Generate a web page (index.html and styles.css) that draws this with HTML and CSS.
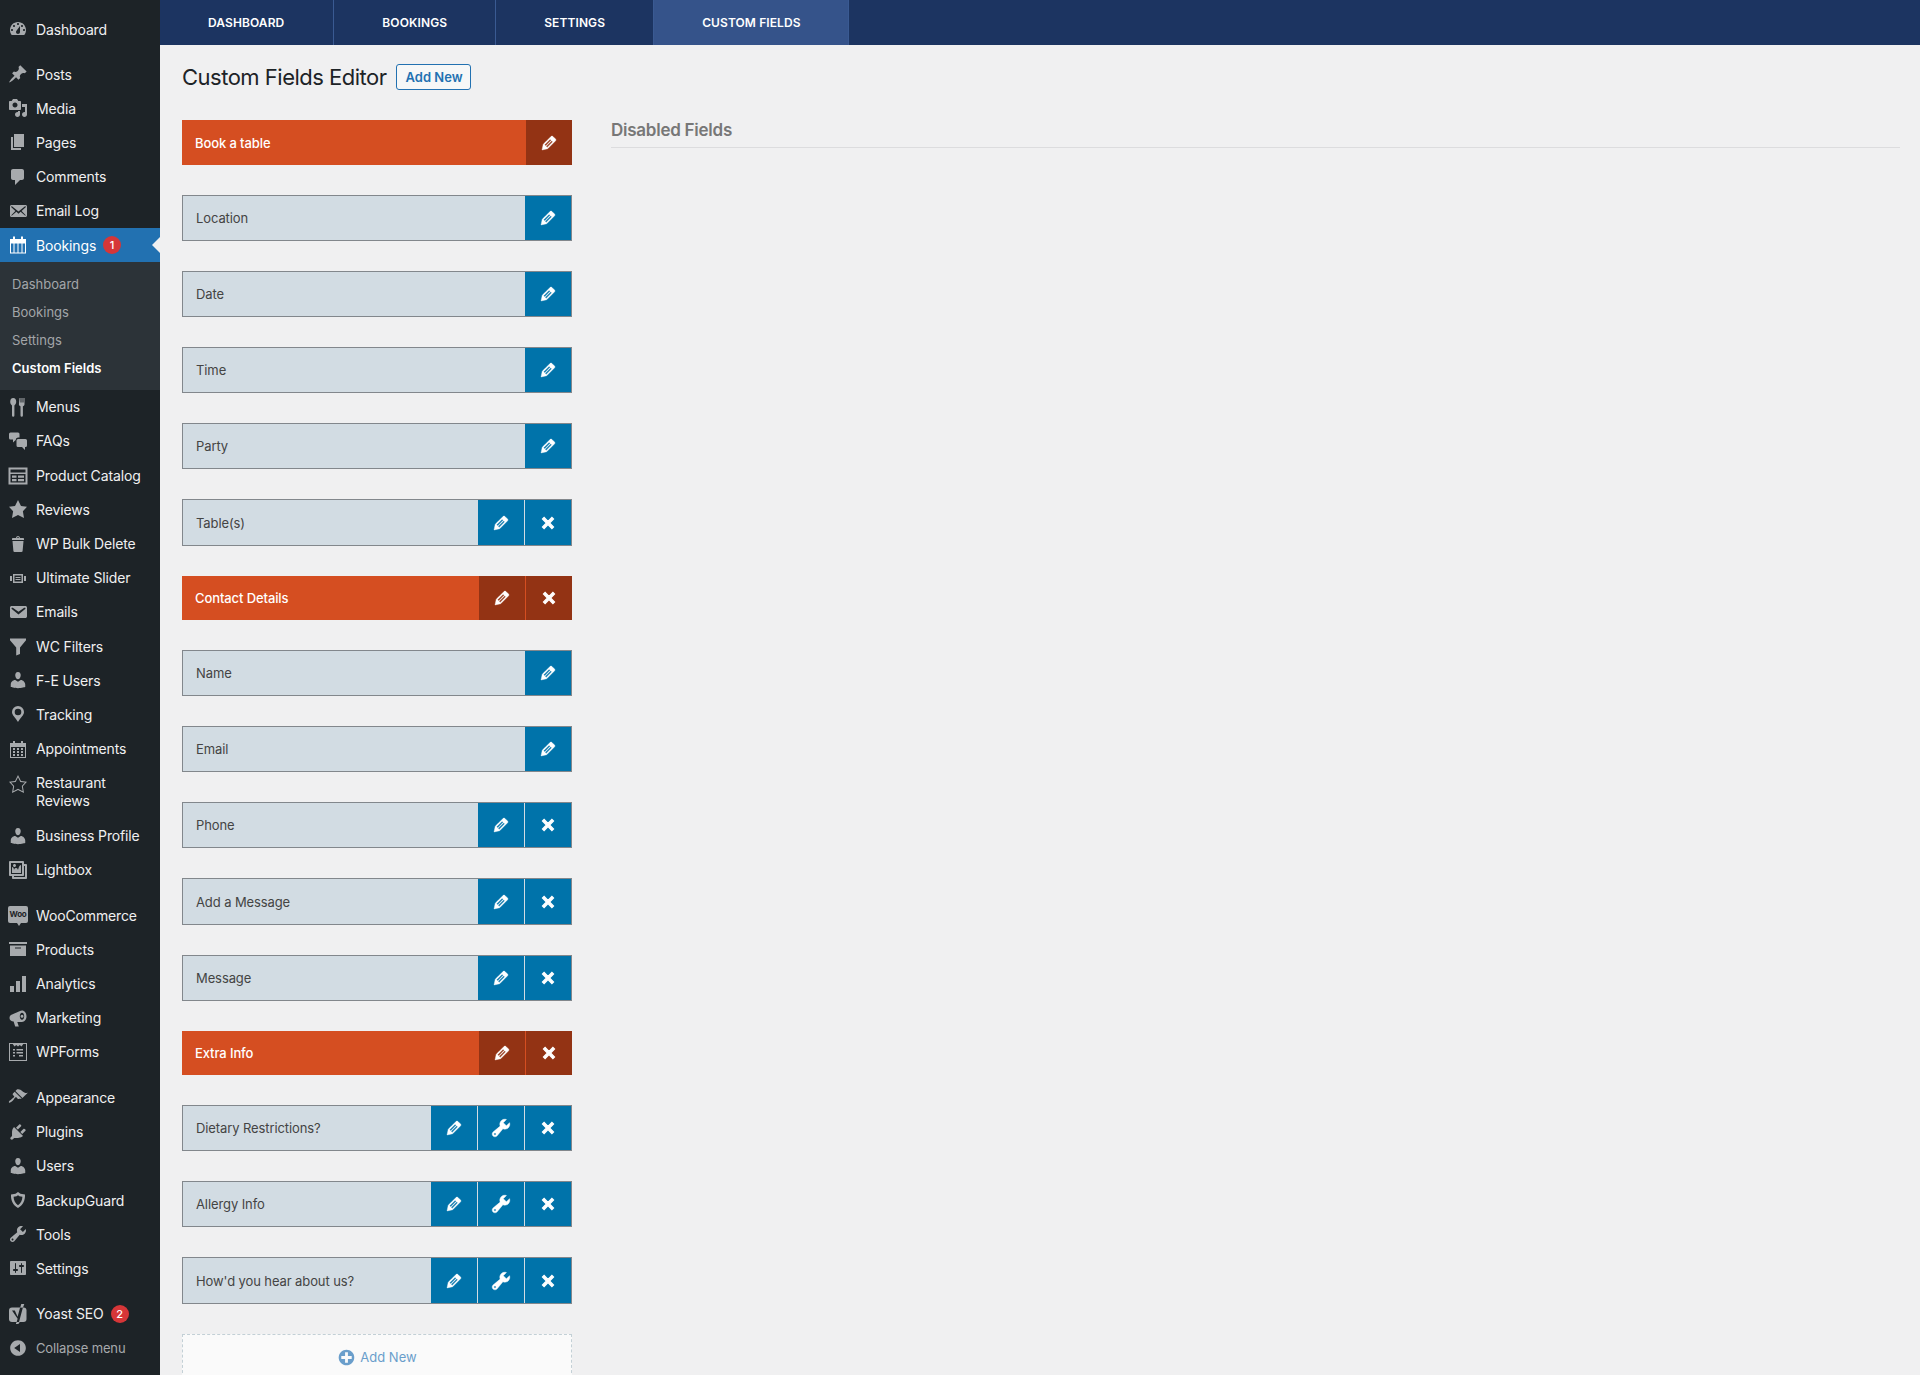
FILE: index.html
```html
<!DOCTYPE html>
<html lang="en">
<head>
  <meta charset="UTF-8">
  <title>Custom Fields Editor</title>
  <link rel="stylesheet" href="styles.css">
</head>
<body>

  <svg class="sprite" xmlns="http://www.w3.org/2000/svg">
    <symbol id="i-dashboard" viewBox="0 0 20 20"><path d="M3.76 16h12.48c1.1-1.37 1.76-3.11 1.76-5 0-4.42-3.58-8-8-8s-8 3.58-8 8c0 1.89.66 3.63 1.76 5zM10 4c.55 0 1 .45 1 1s-.45 1-1 1-1-.45-1-1 .45-1 1-1zM6 6c.55 0 1 .45 1 1s-.45 1-1 1-1-.45-1-1 .45-1 1-1zm8 0c.55 0 1 .45 1 1s-.45 1-1 1-1-.45-1-1 .45-1 1-1zm-5.37 5.55L12 7v6c0 1.1-.9 2-2 2s-2-.9-2-2c0-.57.24-1.08.63-1.45zM4 10c.55 0 1 .45 1 1s-.45 1-1 1-1-.45-1-1 .45-1 1-1zm12 0c.55 0 1 .45 1 1s-.45 1-1 1-1-.45-1-1 .45-1 1-1z" fill-rule="evenodd"/></symbol>
    <symbol id="i-pin" viewBox="0 0 20 20"><path d="M10.44 3.02l1.82-1.82 6.36 6.35-1.83 1.82c-1.05-.68-2.48-.57-3.41.36l-.75.75c-.92.93-1.04 2.35-.35 3.41l-1.83 1.82-2.41-2.41-2.8 2.79c-.42.42-3.38 2.71-3.8 2.29s1.86-3.39 2.28-3.81l2.79-2.79L4.1 9.36l1.83-1.82c1.05.69 2.48.57 3.4-.36l.75-.75c.93-.92 1.05-2.35.36-3.41z"/></symbol>
    <symbol id="i-media" viewBox="0 0 20 20"><path fill-rule="evenodd" d="M13 11V4c0-.55-.45-1-1-1h-1.67L9 1H5L3.67 3H2c-.55 0-1 .45-1 1v7c0 .55.45 1 1 1h10c.55 0 1-.45 1-1zM7 4.5c1.38 0 2.5 1.12 2.5 2.5S8.38 9.5 7 9.5 4.5 8.38 4.5 7 5.62 4.5 7 4.5zM14 6h5v10.5c0 1.38-1.12 2.5-2.5 2.5S14 17.88 14 16.5s1.12-2.5 2.5-2.5c.17 0 .34.02.5.05V9h-3V6zm-4 8.05V13h2v3.5c0 1.38-1.12 2.5-2.5 2.5S7 17.88 7 16.5 8.12 14 9.5 14c.17 0 .34.02.5.05z"/></symbol>
    <symbol id="i-page" viewBox="0 0 20 20"><path d="M6 15V2h10v13H6zm-1 1h8v2H3V5h2v11z"/></symbol>
    <symbol id="i-comment" viewBox="0 0 20 20"><path d="M5 2h9c1.1 0 2 .9 2 2v7c0 1.1-.9 2-2 2h-2l-5 5v-5H5c-1.1 0-2-.9-2-2V4c0-1.1.9-2 2-2z"/></symbol>
    <symbol id="i-mail-open" viewBox="0 0 20 20"><path d="M19 14.5v-9c0-.83-.67-1.5-1.5-1.5H3.49c-.83 0-1.5.67-1.5 1.5v9c0 .83.67 1.5 1.5 1.5H17.5c.83 0 1.5-.67 1.5-1.5zm-1.31-9.11c.33.33.15.67-.03.84L13.6 9.95l3.9 4.06c.12.14.2.36.06.51-.13.16-.43.15-.56.05l-4.37-3.73-2.14 1.95-2.13-1.95-4.37 3.73c-.13.1-.43.11-.56-.05-.14-.15-.06-.37.06-.51l3.9-4.06-4.06-3.72c-.18-.17-.36-.51-.03-.84s.67-.17.95.07l6.24 5.04 6.25-5.04c.28-.24.62-.4.95-.07z"/></symbol>
    <symbol id="i-bookings" viewBox="0 0 20 20"><path fill-rule="evenodd" d="M2 4h3V1.500h2V4h6V1.500h2V4h3v14.500H2V4zm1 4.500V17.500h2.500v-9H3zm3.500 0V17.500h3v-9h-3zm4 0V17.500h3v-9h-3zm4 0V17.500H17v-9h-2.500z"/></symbol>
    <symbol id="i-menus" viewBox="0 0 20 20"><path d="M5.200 1a3 3.800 0 0 1 3 3.800c0 1.800-.9 3.200-1.800 3.600V18.500a1.200 1.200 0 0 1-2.400 0V8.400C3.100 8 2.200 6.600 2.200 4.800A3 3.800 0 0 1 5.200 1zM11.500 1h1v4.500h1V1h1v4.500h1V1h1v6.300c0 1-.7 1.700-1.600 1.900V18.500a1.200 1.200 0 0 1-2.400 0V9.200c-.9-.2-1.600-.9-1.600-1.900z"/></symbol>
    <symbol id="i-faq" viewBox="0 0 20 20"><path d="M2.500 1.500h7.500a1.500 1.500 0 0 1 1.500 1.500V6.500H10a2.500 2.500 0 0 0-2.300 2.500L5 11.500v-3H2.500A1.500 1.500 0 0 1 1 7V3a1.500 1.500 0 0 1 1.500-1.500zM10 8h7.500A1.500 1.500 0 0 1 19 9.500v5a1.500 1.500 0 0 1-1.500 1.500H17v3l-3-3h-4a1.500 1.500 0 0 1-1.500-1.500v-5A1.500 1.500 0 0 1 10 8z"/></symbol>
    <symbol id="i-catalog" viewBox="0 0 20 20"><path fill-rule="evenodd" d="M.5 2.500h19v17H.5v-17zM2.500 4.500v3h15v-3h-15zM2.500 9v8.500h15V9h-15zM4 10.500h4.500v2.200H4v-2.200zm0 3.500h4.500v2.200H4V14zm6-3.500h6v2.200h-6v-2.200zm0 3.500h6v2.200h-6V14z"/></symbol>
    <symbol id="i-star" viewBox="0 0 20 20"><path d="M10 1l3 6 6 .75-4.120 4.620L16 19l-6-3-6 3 1.130-6.630L1 7.750 7 7z"/></symbol>
    <symbol id="i-trash" viewBox="0 0 20 20"><path d="M12 4h3c.6 0 1 .4 1 1v1H4V5c0-.6.500-1 1-1h3c.2-1.100 1-2 2-2s1.800.9 2 2zM9 4h2c-.2-.6-.5-1-1-1s-.8.4-1 1zM4.500 7h11l-.9 10.100c0 .5-.5.9-1 .9H6.400c-.5 0-.9-.4-1-.9z"/></symbol>
    <symbol id="i-slides" viewBox="0 0 20 20"><path fill-rule="evenodd" d="M5 15V6h10v9H5zm1.500-7.500v6h7v-6h-7zM7.500 9h5v1h-5V9zm0 2h5v1h-5v-1zM2 8h2v5H2V8zm14 0h2v5h-2V8z"/></symbol>
    <symbol id="i-mail" viewBox="0 0 20 20"><path d="M3.870 4h13.250C18.370 4 19 4.590 19 5.790v8.420c0 1.190-.63 1.790-1.880 1.790H3.870c-1.250 0-1.880-.6-1.880-1.790V5.790c0-1.200.63-1.790 1.880-1.790zm6.620 8.600l6.740-5.530c.24-.2.43-.66.13-1.070-.29-.41-.82-.42-1.170-.17l-5.700 3.860L4.800 5.830c-.35-.25-.88-.24-1.170.17-.3.41-.11.87.13 1.070z"/></symbol>
    <symbol id="i-filter" viewBox="0 0 20 20"><path d="M2 2.500h16v1.800L12 11.500v6.500l-3.800 1.500v-8L2 4.300z"/></symbol>
    <symbol id="i-user" viewBox="0 0 20 20"><path d="M10 9.250c-2.270 0-2.730-3.440-2.730-3.440C7 4.020 7.820 2 9.970 2c2.160 0 2.980 2.020 2.710 3.810 0 0-.41 3.440-2.680 3.440zm0 2.570L12.720 10c2.390 0 4.520 2.330 4.520 4.530v2.490s-3.650 1.130-7.240 1.130c-3.650 0-7.240-1.130-7.240-1.130v-2.490c0-2.250 1.940-4.480 4.470-4.480z"/></symbol>
    <symbol id="i-location" viewBox="0 0 20 20"><path fill-rule="evenodd" d="M10 2a6 6 0 0 0-6 6c0 3.200 3.500 5.500 6 10 2.500-4.500 6-6.800 6-10a6 6 0 0 0-6-6zm0 2.700a3.300 3.300 0 1 1 0 6.600 3.300 3.300 0 0 1 0-6.600z"/></symbol>
    <symbol id="i-calendar" viewBox="0 0 20 20"><path fill-rule="evenodd" d="M15 4h3v15H2V4h3V2h2v2h6V2h2v2zm2 4H3v10h14V8zM5 9h2v2H5V9zm4 0h2v2H9V9zm4 0h2v2h-2V9zm-8 3h2v2H5v-2zm4 0h2v2H9v-2zm4 0h2v2h-2v-2zm-8 3h2v2H5v-2zm4 0h2v2H9v-2zm4 0h2v2h-2v-2z"/></symbol>
    <symbol id="i-star-empty" viewBox="0 0 20 20"><path fill-rule="evenodd" d="M10 1L7 7l-6 .75 4.130 4.620L4 19l6-3 6 3-1.130-6.630L19 7.750 13 7zm0 2.240l2.340 4.690 4.650.58-3.180 3.560.87 5.150L10 14.780l-4.680 2.440.87-5.150-3.180-3.560 4.650-.58z"/></symbol>
    <symbol id="i-gallery" viewBox="0 0 20 20"><path fill-rule="evenodd" d="M16 4h1.960c.57 0 1.040.47 1.040 1.040v12.920c0 .57-.47 1.040-1.040 1.040H5.040C4.470 19 4 18.530 4 17.960V16H2.040C1.470 16 1 15.530 1 14.960V2.040C1 1.470 1.470 1 2.040 1h12.920c.57 0 1.040.47 1.040 1.040V4zM3 14h11V3H3v11zm5-8.500C8 4.670 7.330 4 6.500 4S5 4.670 5 5.500 5.670 7 6.500 7 8 6.330 8 5.500zm2 4.500s1-5 3-5v8H4V7c2 0 2 3 2 3s.33-2 2-2 2 2 2 2zm7 7V6h-1v8.960c0 .57-.47 1.040-1.040 1.040H6v1h11z"/></symbol>
    <symbol id="i-archive" viewBox="0 0 20 20"><path fill-rule="evenodd" d="M19 3v2H1V3h18zM2 6.500h16V17H2V6.500zM13 9.500v-1H7v1h6z"/></symbol>
    <symbol id="i-chart" viewBox="0 0 20 20"><path d="M18 18V2h-4v16h4zm-6 0V7H8v11h4zm-6 0v-6H2v6h4z"/></symbol>
    <symbol id="i-megaphone" viewBox="0 0 20 20"><path fill-rule="evenodd" d="M14 2.500c2.500 0 4.500 2.700 4.500 5.800s-2 5.700-4.500 5.700H9.300l1.500 4.500H7.200L5.600 13.600C3.500 13.500 1.500 12 1.500 10c0-1.700 1-2.800 2.500-3.500l7.500-3.300c.8-.5 1.600-.7 2.500-.7zm0 2.300c-1.300 0-2.200 1.600-2.200 3.500s.9 3.400 2.200 3.400 2.200-1.500 2.200-3.400-.9-3.500-2.200-3.500zm0 2a1.500 1.500 0 1 1 0 3 1.500 1.500 0 0 1 0-3z"/></symbol>
    <symbol id="i-wpforms" viewBox="0 0 20 20"><path fill-rule="evenodd" d="M1 1h18v18H1V1zm1 1v16h16V2h-2.700L13.500 4.500 11.800 3 10 4.500 8.200 3 6.500 4.500 4.700 2H2zM5 7h2v1.500H5V7zm3.500 0H15v1.500H8.500V7zM5 10h2v1.500H5V10zm3.500 0H15v1.500H8.500V10zM5 13h2v1.500H5V13zm6 0h4v1.500h-4V13z"/></symbol>
    <symbol id="i-brush" viewBox="0 0 20 20"><path d="M14.480 11.060L7.410 3.990l1.500-1.500c.5-.56 2.300-.47 3.510.32 1.210.8 1.430 1.280 2.910 2.100 1.180.64 2.450 1.260 4.450.85zm-.71.71L6.700 4.700 4.930 6.470c-.39.39-.39 1.020 0 1.410l1.060 1.060c.39.39.39 1.030 0 1.420-.6.6-1.430 1.110-2.210 1.690-.35.26-.7.53-1.010.84C1.430 13.230.4 14.960 1 15.560s2.330-.43 3.670-1.770c.31-.31.58-.66.84-1.010.58-.78 1.090-1.610 1.690-2.210.39-.39 1.020-.39 1.410 0l1.060 1.060c.39.39 1.020.39 1.410 0z"/></symbol>
    <symbol id="i-plugin" viewBox="0 0 20 20"><path d="M13.110 4.360L9.870 7.600 8 5.730l3.240-3.240c.35-.34 1.050-.2 1.560.32.52.51.66 1.210.31 1.550zm-8 1.770l.91-1.120 9.010 9.010-1.190.84c-.71.71-2.630 1.160-3.820 1.160H6.140L4.900 17.260c-.59.59-1.540.59-2.120 0-.59-.58-.59-1.530 0-2.120l1.240-1.240v-3.880c0-1.130.4-3.190 1.090-3.890zm7.260 3.970l3.240-3.240c.34-.35 1.040-.21 1.550.31.52.51.66 1.210.31 1.550l-3.240 3.250z"/></symbol>
    <symbol id="i-shield" viewBox="0 0 20 20"><path fill-rule="evenodd" d="M10 2l2.500 1.800 4.500.7c.3 5.600-1.800 10.700-7 13.500C4.800 15.200 2.700 10.100 3 4.500l4.500-.7zm0 3.300L8.600 6.300l-3 .5c.1 3.300 1.400 6.400 4.400 8.500 3-2.100 4.300-5.200 4.400-8.500l-3-.5z"/></symbol>
    <symbol id="i-wrench" viewBox="0 0 20 20"><path fill-rule="evenodd" d="M16.680 9.770c-1.340 1.340-3.300 1.670-4.950.99l-5.410 6.520c-.99.99-2.590.99-3.580 0s-.99-2.590 0-3.570l6.520-5.420c-.68-1.650-.35-3.610.99-4.950 1.280-1.280 3.120-1.620 4.720-1.060l-2.890 2.890 2.820 2.820 2.860-2.870c.53 1.580.18 3.390-1.080 4.650zM3.810 16.210c.4.39 1.040.39 1.430 0 .4-.4.4-1.040 0-1.430-.39-.4-1.030-.4-1.430 0-.39.39-.39 1.030 0 1.430z"/></symbol>
    <symbol id="i-sliders" viewBox="0 0 20 20"><path fill-rule="evenodd" d="M18 16V4c0-.55-.45-1-1-1H3c-.55 0-1 .45-1 1v12c0 .55.45 1 1 1h14c.55 0 1-.45 1-1zM8 11h1c.55 0 1 .45 1 1s-.45 1-1 1H8v1.500c0 .28-.22.5-.5.5s-.5-.22-.5-.5V13H6c-.55 0-1-.45-1-1s.45-1 1-1h1V5.500c0-.28.22-.5.5-.5s.5.22.5.5V11zm5-2h-1c-.55 0-1-.45-1-1s.45-1 1-1h1V5.500c0-.28.22-.5.5-.5s.5.22.5.5V7h1c.55 0 1 .45 1 1s-.45 1-1 1h-1v5.500c0 .28-.22.5-.5.5s-.5-.22-.5-.5V9z"/></symbol>
    <symbol id="i-yoast" viewBox="0 0 20 20">
      <rect x="1" y="3.500" width="17.500" height="14.500" rx="3"/>
      <path fill="#1d2327" d="M4 6.500h2.800l2.800 6.200 2.500-9.200h2.800l-3.900 14.500H8.700l.9-3.200z"/>
      <path d="M12.200 3.500L13.300 0h3l-1.300 3.500zM8.700 18h2.900l-.4 1c-.5 1-1.600 1.400-3.200 1.400v-1.500c.3 0 .6-.4.700-.9z"/>
    </symbol>
    <symbol id="i-collapse" viewBox="0 0 20 20"><path fill-rule="evenodd" d="M10 2.160c4.330 0 7.840 3.510 7.840 7.840s-3.510 7.840-7.840 7.840S2.160 14.330 2.160 10 5.710 2.160 10 2.160zm2 11.720V6.120L6.180 9.970z"/></symbol>
    <symbol id="i-edit" viewBox="0 0 20 20"><path fill-rule="evenodd" d="M13.890 3.390l2.710 2.720c.46.46.42 1.240.03 1.640l-8.010 8.020-5.560 1.160 1.160-5.580s7.600-7.630 7.990-8.030c.39-.39 1.220-.39 1.680.07zm-2.730 2.790l-5.590 5.610 1.110 1.110 5.540-5.650zm-2.970 8.230l5.580-5.600-1.070-1.080-5.590 5.600z"/></symbol>
    <symbol id="i-close" viewBox="0 0 20 20"><path d="M14.950 6.460L11.410 10l3.540 3.540-1.410 1.410L10 11.420l-3.530 3.530-1.420-1.420L8.580 10 5.050 6.470l1.420-1.420L10 8.580l3.540-3.530z"/></symbol>
    <symbol id="i-plus" viewBox="0 0 20 20"><path fill-rule="evenodd" d="M15.800 4.200c3.200 3.210 3.200 8.390 0 11.600-3.210 3.200-8.390 3.200-11.600 0C1 12.590 1 7.410 4.200 4.200 7.410 1 12.590 1 15.800 4.200zm-4.300 11.300v-4h4v-3h-4v-4h-3v4h-4v3h4v4h3z"/></symbol>
  </svg>

  <div class="layout">
    <aside class="sidebar">
      <ul class="menu">
        <li><svg class="ico"><use href="#i-dashboard"/></svg><span>Dashboard</span></li>
      </ul>
      <ul class="menu">
        <li><svg class="ico"><use href="#i-pin"/></svg><span>Posts</span></li>
        <li><svg class="ico"><use href="#i-media"/></svg><span>Media</span></li>
        <li><svg class="ico"><use href="#i-page"/></svg><span>Pages</span></li>
        <li><svg class="ico"><use href="#i-comment"/></svg><span>Comments</span></li>
        <li><svg class="ico"><use href="#i-mail-open"/></svg><span>Email Log</span></li>
        <li class="active"><svg class="ico"><use href="#i-bookings"/></svg><span>Bookings</span><b class="badge">1</b></li>
      </ul>
      <ul class="submenu">
        <li>Dashboard</li>
        <li>Bookings</li>
        <li>Settings</li>
        <li class="current">Custom Fields</li>
      </ul>
      <ul class="menu">
        <li><svg class="ico"><use href="#i-menus"/></svg><span>Menus</span></li>
        <li><svg class="ico"><use href="#i-faq"/></svg><span>FAQs</span></li>
        <li><svg class="ico"><use href="#i-catalog"/></svg><span>Product Catalog</span></li>
        <li><svg class="ico"><use href="#i-star"/></svg><span>Reviews</span></li>
        <li><svg class="ico"><use href="#i-trash"/></svg><span>WP Bulk Delete</span></li>
        <li><svg class="ico"><use href="#i-slides"/></svg><span>Ultimate Slider</span></li>
        <li><svg class="ico"><use href="#i-mail"/></svg><span>Emails</span></li>
        <li><svg class="ico"><use href="#i-filter"/></svg><span>WC Filters</span></li>
        <li><svg class="ico"><use href="#i-user"/></svg><span>F-E Users</span></li>
        <li><svg class="ico"><use href="#i-location"/></svg><span>Tracking</span></li>
        <li><svg class="ico"><use href="#i-calendar"/></svg><span>Appointments</span></li>
        <li class="two-line"><svg class="ico"><use href="#i-star-empty"/></svg><span>Restaurant Reviews</span></li>
        <li><svg class="ico"><use href="#i-user"/></svg><span>Business Profile</span></li>
        <li><svg class="ico"><use href="#i-gallery"/></svg><span>Lightbox</span></li>
      </ul>
      <ul class="menu">
        <li><span class="woo"><i>Woo</i></span><span>WooCommerce</span></li>
        <li><svg class="ico"><use href="#i-archive"/></svg><span>Products</span></li>
        <li><svg class="ico"><use href="#i-chart"/></svg><span>Analytics</span></li>
        <li><svg class="ico"><use href="#i-megaphone"/></svg><span>Marketing</span></li>
        <li><svg class="ico"><use href="#i-wpforms"/></svg><span>WPForms</span></li>
      </ul>
      <ul class="menu">
        <li><svg class="ico"><use href="#i-brush"/></svg><span>Appearance</span></li>
        <li><svg class="ico"><use href="#i-plugin"/></svg><span>Plugins</span></li>
        <li><svg class="ico"><use href="#i-user"/></svg><span>Users</span></li>
        <li><svg class="ico"><use href="#i-shield"/></svg><span>BackupGuard</span></li>
        <li><svg class="ico"><use href="#i-wrench"/></svg><span>Tools</span></li>
        <li><svg class="ico"><use href="#i-sliders"/></svg><span>Settings</span></li>
      </ul>
      <ul class="menu">
        <li><svg class="ico"><use href="#i-yoast"/></svg><span>Yoast SEO</span><b class="badge">2</b></li>
        <li class="collapse"><svg class="ico"><use href="#i-collapse"/></svg><span>Collapse menu</span></li>
      </ul>
    </aside>

    <main class="main">
      <nav class="tabs">
        <a>Dashboard</a>
        <a>Bookings</a>
        <a>Settings</a>
        <a class="on">Custom Fields</a>
      </nav>

      <div class="page">
        <div class="title-row">
          <h1>Custom Fields Editor</h1>
          <a class="btn-add">Add New</a>
        </div>

        <div class="columns">
          <section class="fields">
            <div class="row group first">
              <span class="name">Book a table</span>
              <a class="act"><svg><use href="#i-edit"/></svg></a>
            </div>
            <div class="row"><span class="name">Location</span><a class="act"><svg><use href="#i-edit"/></svg></a></div>
            <div class="row"><span class="name">Date</span><a class="act"><svg><use href="#i-edit"/></svg></a></div>
            <div class="row"><span class="name">Time</span><a class="act"><svg><use href="#i-edit"/></svg></a></div>
            <div class="row"><span class="name">Party</span><a class="act"><svg><use href="#i-edit"/></svg></a></div>
            <div class="row tall">
              <span class="name">Table(s)</span>
              <a class="act"><svg><use href="#i-edit"/></svg></a>
              <a class="act"><svg class="x"><use href="#i-close"/></svg></a>
            </div>

            <div class="row group">
              <span class="name">Contact Details</span>
              <a class="act"><svg><use href="#i-edit"/></svg></a>
              <a class="act"><svg class="x"><use href="#i-close"/></svg></a>
            </div>
            <div class="row"><span class="name">Name</span><a class="act"><svg><use href="#i-edit"/></svg></a></div>
            <div class="row"><span class="name">Email</span><a class="act"><svg><use href="#i-edit"/></svg></a></div>
            <div class="row">
              <span class="name">Phone</span>
              <a class="act"><svg><use href="#i-edit"/></svg></a>
              <a class="act"><svg class="x"><use href="#i-close"/></svg></a>
            </div>
            <div class="row tall">
              <span class="name">Add a Message</span>
              <a class="act"><svg><use href="#i-edit"/></svg></a>
              <a class="act"><svg class="x"><use href="#i-close"/></svg></a>
            </div>
            <div class="row">
              <span class="name">Message</span>
              <a class="act"><svg><use href="#i-edit"/></svg></a>
              <a class="act"><svg class="x"><use href="#i-close"/></svg></a>
            </div>

            <div class="row group">
              <span class="name">Extra Info</span>
              <a class="act"><svg><use href="#i-edit"/></svg></a>
              <a class="act"><svg class="x"><use href="#i-close"/></svg></a>
            </div>
            <div class="row">
              <span class="name">Dietary Restrictions?</span>
              <a class="act"><svg><use href="#i-edit"/></svg></a>
              <a class="act"><svg class="w"><use href="#i-wrench"/></svg></a>
              <a class="act"><svg class="x"><use href="#i-close"/></svg></a>
            </div>
            <div class="row">
              <span class="name">Allergy Info</span>
              <a class="act"><svg><use href="#i-edit"/></svg></a>
              <a class="act"><svg class="w"><use href="#i-wrench"/></svg></a>
              <a class="act"><svg class="x"><use href="#i-close"/></svg></a>
            </div>
            <div class="row tall">
              <span class="name">How'd you hear about us?</span>
              <a class="act"><svg><use href="#i-edit"/></svg></a>
              <a class="act"><svg class="w"><use href="#i-wrench"/></svg></a>
              <a class="act"><svg class="x"><use href="#i-close"/></svg></a>
            </div>

            <div class="add-box">
              <svg><use href="#i-plus"/></svg>
              <span>Add New</span>
            </div>
          </section>

          <section class="disabled">
            <h3>Disabled Fields</h3>
          </section>
        </div>
      </div>
    </main>
  </div>

</body>
</html>
```

FILE: styles.css
```css
* { box-sizing: border-box; }

html, body {
  height: 100%;
  overflow: hidden;
}

body {
  margin: 0;
  font-family: Inter, "Liberation Sans", sans-serif;
  font-size: 13px;
  background-color: #f0f0f1;
  color: #1d2327;
}

.sprite {
  display: none;
}

.layout {
  display: flex;
  height: 100%;
}

/* sidebar */
.sidebar {
  width: 160px;
  flex-shrink: 0;
  padding-top: 12px;
  background-color: #1d2327;
}

.menu, .submenu {
  list-style: none;
  margin: 0;
  padding: 0;
}

.menu {
  margin-bottom: 11.3px;
}

.menu:has(+ .submenu) {
  margin-bottom: 0;
}

.menu:first-child {
  margin-bottom: 10.8px;
}

.menu li {
  position: relative;
  display: flex;
  align-items: center;
  gap: 8px;
  height: 34.2px;
  padding-left: 8px;
  color: #f0f0f1;
  font-size: 14px;
  letter-spacing: -0.14px;
}

.ico {
  width: 20px;
  height: 20px;
  flex-shrink: 0;
  fill: #a7aaad;
}

.woo {
  position: relative;
  display: flex;
  align-items: center;
  justify-content: center;
  width: 20px;
  height: 17px;
  margin-top: -2px;
  flex-shrink: 0;
  border-radius: 2px;
  background-color: #a7aaad;
}

.woo::after {
  content: "";
  position: absolute;
  left: 9px;
  bottom: -3px;
  border-top: 3px solid #a7aaad;
  border-left: 2px solid transparent;
  border-right: 2px solid transparent;
}

.woo i {
  color: #1d2327;
  font-size: 8px;
  font-style: normal;
  font-weight: 700;
  letter-spacing: -0.2px;
}

.menu li.active {
  background-color: #2271b1;
  color: #fff;
}

.menu li.active .ico {
  fill: #fff;
}

.menu li.active::after {
  content: "";
  position: absolute;
  right: 0;
  top: 50%;
  margin-top: -8px;
  border: 8px solid transparent;
  border-right-color: #f0f0f1;
  border-left-width: 0;
}

.menu li.two-line {
  height: 52.7px;
  align-items: flex-start;
  padding-top: 8px;
  line-height: 18px;
}

.badge {
  width: 18px;
  height: 18px;
  margin-left: -1px;
  border-radius: 50%;
  background-color: #d63638;
  color: #fff;
  font-size: 11px;
  font-weight: 500;
  line-height: 18px;
  text-align: center;
  letter-spacing: 0;
}

.menu li.collapse {
  color: #a7aaad;
  font-size: 13px;
}

.submenu {
  padding: 7.6px 0 8px;
  background-color: #2c3338;
}

.submenu li {
  height: 28px;
  padding-left: 12px;
  color: #a3a6a9;
  font-size: 13px;
  line-height: 28px;
}

.submenu li.current {
  color: #fff;
  font-weight: 600;
}

/* top tabs */
.main {
  flex: 1;
  min-width: 0;
}

.tabs {
  display: flex;
  height: 45px;
  background-color: #1c3461;
}

.tabs a {
  padding: 0 48px;
  border-right: 1px solid #3a5a92;
  color: #fff;
  font-size: 12px;
  font-weight: 600;
  letter-spacing: 0.1px;
  line-height: 45px;
  text-transform: uppercase;
}

.tabs a:first-child {
  padding-right: 49px;
}

.tabs a.on {
  padding-right: 47px;
  background-color: #35538a;
}

/* page */
.page {
  padding: 19px 20px 0 22px;
}

.title-row {
  display: flex;
  align-items: center;
  gap: 9px;
  height: 26px;
}

h1 {
  margin: 0;
  font-size: 22px;
  font-weight: 400;
  letter-spacing: -0.5px;
}

.btn-add {
  height: 26px;
  padding: 0 7px 0 9px;
  border: 1px solid #2271b1;
  border-radius: 3px;
  background-color: #f6f7f7;
  color: #2271b1;
  font-size: 13px;
  font-weight: 600;
  line-height: 24px;
}

.columns {
  display: flex;
  gap: 39px;
  margin-top: 30px;
}

.fields {
  width: 390px;
  flex-shrink: 0;
}

.disabled {
  flex: 1;
}

.disabled h3 {
  height: 28px;
  margin: 0;
  border-bottom: 1px solid #dcdcde;
  color: #777;
  font-size: 17px;
  font-weight: 600;
  letter-spacing: -0.25px;
  line-height: 21px;
}

/* field rows */
.row {
  display: flex;
  height: 46px;
  margin-bottom: 30px;
  border: 1px solid #82878c;
  background-color: #d2dce3;
}

.row.tall {
  height: 47px;
}

.row.tall .name {
  line-height: 46px;
}

.row.group {
  height: 44px;
  margin-bottom: 30px;
  border: 0;
  background-color: #d54e21;
}

.row.group.first {
  height: 45px;
}

.name {
  flex: 1;
  padding-left: 13px;
  color: #444;
  font-size: 13px;
  letter-spacing: -0.1px;
  line-height: 44px;
}

.row.group .name {
  color: #fff;
  font-weight: 500;
  line-height: 45px;
}

.row.group.first .name {
  line-height: 46px;
}

.act {
  display: flex;
  align-items: center;
  justify-content: center;
  width: 46px;
  margin-left: 1px;
  background-color: #0073aa;
}

.act:first-of-type {
  margin-left: 0;
}

.group .act {
  background-color: #933314;
}

.act svg {
  width: 20px;
  height: 20px;
  fill: #fff;
  stroke: #fff;
  stroke-width: 0.4;
}

.act svg.w {
  width: 22px;
  height: 22px;
}

.act svg.x {
  width: 22px;
  height: 22px;
  stroke-width: 1.2;
}

.add-box {
  display: flex;
  align-items: flex-start;
  justify-content: center;
  gap: 4px;
  height: 70px;
  padding-top: 13px;
  border: 1px dashed #c3d0d6;
  background-color: #fafafa;
  color: #6a9ecb;
  font-size: 13px;
  line-height: 18px;
}

.add-box svg {
  width: 19px;
  height: 19px;
  fill: #6a9ecb;
}
```
